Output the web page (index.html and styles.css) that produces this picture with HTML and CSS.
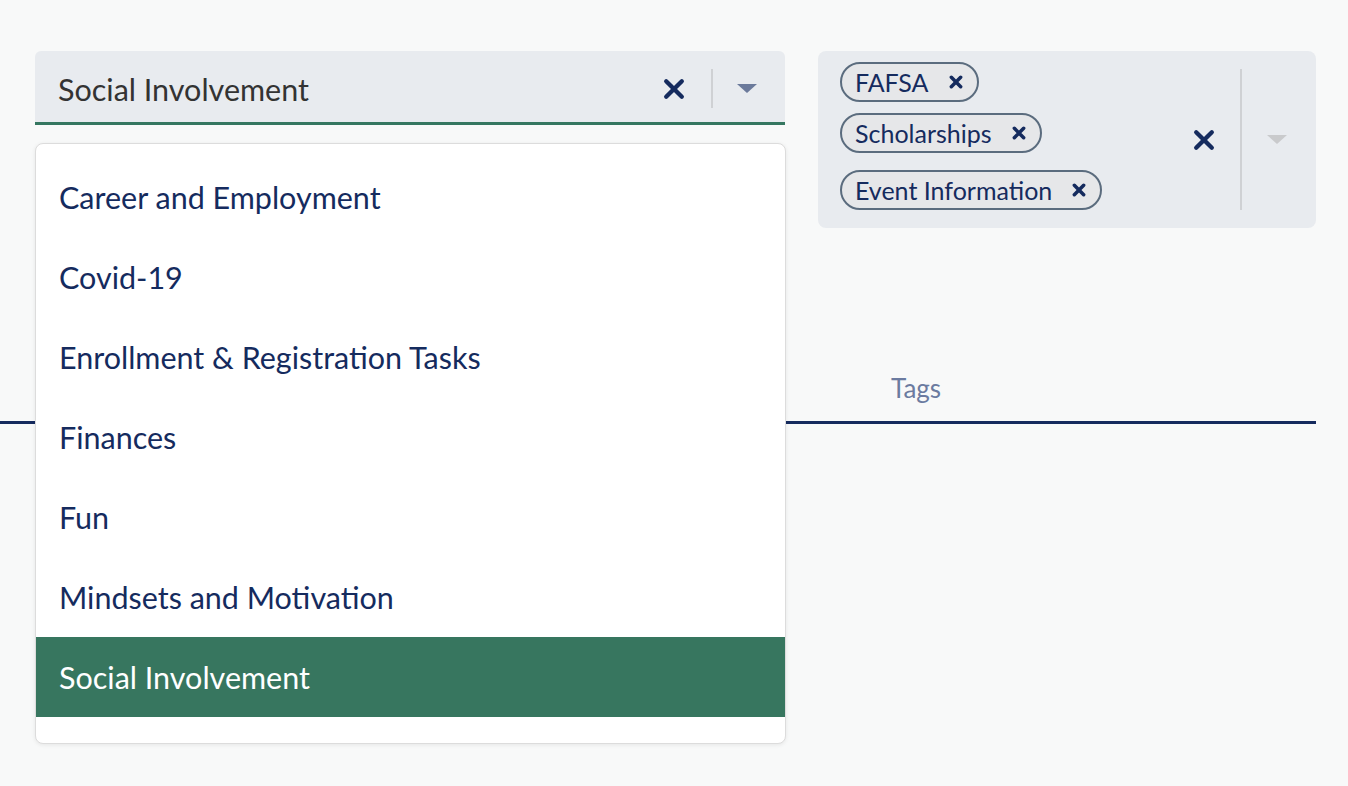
FILE: index.html
```html
<!DOCTYPE html>
<html lang="en">
<head>
    <meta charset="UTF-8">
    <title>Filters</title>
    <link rel="stylesheet" href="styles.css">
</head>
<body>
    <main class="page">
        <div class="filters">
            <div class="select">
                <div class="select-control">
                    <span class="select-value">Social Involvement</span>
                    <span class="select-clear">
                        <svg viewBox="0 0 20 20"><path d="M3.5 3.5L16.5 16.5M16.5 3.5L3.5 16.5"></path></svg>
                    </span>
                    <span class="select-sep"></span>
                    <span class="select-arrow"></span>
                </div>
                <ul class="select-menu">
                    <li>Career and Employment</li>
                    <li>Covid-19</li>
                    <li>Enrollment &amp; Registration Tasks</li>
                    <li>Finances</li>
                    <li>Fun</li>
                    <li>Mindsets and Motivation</li>
                    <li class="selected">Social Involvement</li>
                </ul>
            </div>

            <div class="multi">
                <div class="chips">
                    <span class="chip">FAFSA <svg viewBox="0 0 12 12"><path d="M2 2L10 10M10 2L2 10"></path></svg></span>
                    <span class="chip">Scholarships <svg viewBox="0 0 12 12"><path d="M2 2L10 10M10 2L2 10"></path></svg></span>
                    <span class="chip chip-last">Event Information <svg viewBox="0 0 12 12"><path d="M2 2L10 10M10 2L2 10"></path></svg></span>
                </div>
                <span class="select-clear">
                    <svg viewBox="0 0 20 20"><path d="M3.5 3.5L16.5 16.5M16.5 3.5L3.5 16.5"></path></svg>
                </span>
                <span class="select-sep tall"></span>
                <span class="select-arrow muted"></span>
            </div>
        </div>

        <nav class="tabs">
            <span class="tab">Tags</span>
        </nav>
    </main>
</body>
</html>
```

FILE: styles.css
```css
*{margin:0;padding:0;box-sizing:border-box}
body{font-family:Lato,'Liberation Sans',sans-serif;background:#f8f9f9;color:#333}

.page{padding:51px 32px 0 0;width:1348px;min-height:786px}
.filters{display:flex;gap:33px;align-items:flex-start;padding-left:35px}

.select{position:relative;width:750px}
.select-control{height:74px;background:#e8ebef;border-radius:6px 6px 0 0;border-bottom:3px solid #357760;display:flex;align-items:center;padding:4px 0 0 23px}
.select-value{flex:1;font-size:30.5px;color:#333}
.select-clear{width:40px;display:flex;justify-content:center;align-items:center}
.select-clear svg{width:24px;height:24px;stroke:#152b5e;stroke-width:3.6;stroke-linecap:round;fill:none}
.select-sep{width:2px;height:39px;background:#cfd1d4;margin:0 24px 0 17px}
.select-arrow{width:0;height:0;border-left:10px solid transparent;border-right:10px solid transparent;border-top:9px solid #6b7a9b;margin-right:28px}
.select-arrow.muted{border-top-color:#c9cacc;margin-right:29px}

.select-menu{position:absolute;top:92px;left:0;width:751px;height:601px;list-style:none;background:#fff;border:1px solid #dcdcdc;border-radius:8px;box-shadow:0 1px 4px rgba(0,0,0,.08);padding-top:13px;overflow:hidden;z-index:10}
.select-menu li{height:80px;line-height:80px;padding-left:23px;font-size:30.5px;color:#152b5e}
.select-menu li.selected{background:#37765f;color:#fff}

.multi{width:498px;height:177px;background:#e8ebef;border-radius:8px;display:flex;align-items:center;padding-left:22px}
.multi .select-clear{margin-left:auto}
.multi .select-sep.tall{height:141px;margin:0 25px 0 16px}
.chips{display:flex;flex-direction:column;align-items:flex-start;gap:11px;align-self:flex-start;padding-top:11px}
.chip{display:inline-flex;align-items:center;height:40px;border:2px solid #5b6c7e;border-radius:20px;background:#e6e7e9;padding:0 14px 0 13px;font-size:25px;color:#152b5e}
.chip svg{width:14px;height:14px;margin-left:20px;stroke:#152b5e;stroke-width:3;stroke-linecap:round;fill:none}
.chip-last{margin-top:6px}

.tabs{margin-top:140px;border-bottom:3px solid #152b5e;width:1316px;height:56px;display:flex;padding-left:891px}
.tab{font-size:26px;color:#6b7ba0;line-height:30px;padding-top:5px}
```
